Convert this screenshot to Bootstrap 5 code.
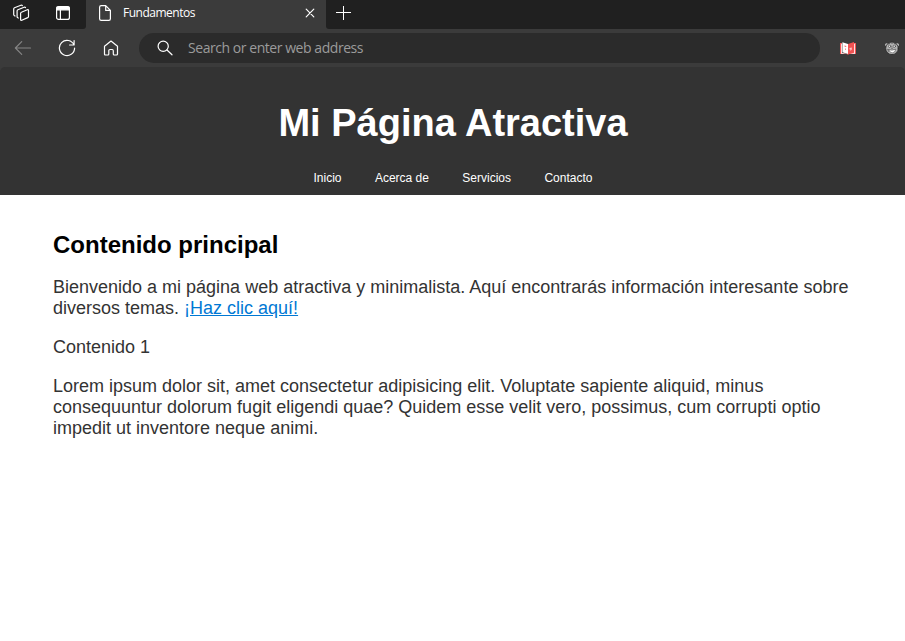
<!DOCTYPE html>
<html lang="es">
<head>
<meta charset="utf-8">
<meta name="viewport" content="width=device-width, initial-scale=1">
<title>Fundamentos</title>
<link href="https://cdn.jsdelivr.net/npm/bootstrap@5.3.0/dist/css/bootstrap.min.css" rel="stylesheet">
<style>
body{font-family:"Liberation Sans",Arial,sans-serif;color:#333;background:#fff;height:641px;overflow:hidden}
svg{display:block;flex:none;fill:none;stroke:#fff;stroke-width:1.2;stroke-linecap:round;stroke-linejoin:round}
.chrome{font-family:"Open Sans","Noto Sans",sans-serif;background:#3b3b3b}
.tab-strip{height:29px;background:#3b3b3b}
.strip-left{width:86px;padding-left:12px;gap:24px;background:#202020;border-bottom-right-radius:3px}
.tab-active{width:240px;padding:0 11px 3px 11px}
.tab-title{font-size:12px;line-height:16px;color:#fff;letter-spacing:-.5px;margin-left:10px}
.strip-right{background:#202020;border-bottom-left-radius:3px;padding:0 0 3px 9px}
.toolbar{height:38px;padding:0 5px 0 14px}
.tool-gap{margin-left:26px}
.back-arrow{stroke:#858585}
.book-icon{margin-left:20px;stroke:none}
.face-icon{margin-left:29px}
.address{width:681px;height:30px;background:#2b2b2b;margin-left:19px;padding-left:17px}
.address span{font-size:14px;line-height:20px;color:#9b9b9b;letter-spacing:-.45px;margin-left:14px}
.header-wrap{background:#3b3b3b}
.site-header{height:128px;background:#333;color:#fff;padding-top:34px;border-radius:5px 5px 0 0}
.site-header h1{font-size:38px;line-height:45px;font-weight:700;margin:0;padding-left:1px}
.site-nav{gap:33.4px;margin-top:25px;padding-left:1px;font-size:12px;line-height:14px}
.site-nav a{color:#fff;text-decoration:none}
main{padding:36px 53px 0;font-size:18px;line-height:21px}
main h2{font-size:24px;line-height:28px;font-weight:700;color:#000;margin:0 0 18px}
main p{margin:0 0 18px}
main a{color:#0078d4}
</style>
</head>
<body>
<div class="chrome">
  <div class="tab-strip d-flex">
    <div class="strip-left d-flex align-items-center pb-1">
      <svg width="18" height="18" viewBox="0 0 18 18"><path d="m9.4 8.2 5.9-2.5q1.2-.4 1.2.8v5.9q0 .8-.8 1.2l-5.9 2.7q-1.2.4-1.2-.8V9.4q0-.9.8-1.2zM6.4 14l-.6-.2q-.7-.3-.7-1.1V7q0-.9.8-1.3l6.2-2.5q1-.3 1.4.4M3 12l-.5-.3q-.8-.3-.8-1.1V5q0-.9.8-1.3L8.9 1.3q.9-.3 1.4.2"/></svg>
      <svg width="18" height="18" viewBox="0 0 18 18"><rect x="2.6" y="2.6" width="12.8" height="12.8" rx="2"/><path d="M3 3h12v2.8H3z" fill="#fff"/><path d="M6.4 6v9"/></svg>
    </div>
    <div class="tab-active d-flex align-items-center">
      <svg width="16" height="18" viewBox="0 0 16 18"><path d="M2.6 3.2q0-1.6 1.6-1.6h4.5l4.7 4.7v8.5q0 1.6-1.6 1.6H4.2q-1.6 0-1.6-1.6zM8.7 1.8v4.6h4.6"/></svg>
      <span class="tab-title">Fundamentos</span>
      <svg class="ms-auto" width="10" height="10" viewBox="0 0 10 10"><path d="m1.2 1.2 7.6 7.6m0-7.6L1.2 8.8"/></svg>
    </div>
    <div class="strip-right flex-grow-1 d-flex align-items-center">
      <svg width="16" height="16" viewBox="0 0 16 16" stroke-linecap="butt" shape-rendering="crispEdges"><path d="M8.5 1.5v13M2 7.5h13.5"/></svg>
    </div>
  </div>
  <div class="toolbar d-flex align-items-center">
    <svg class="back-arrow" width="18" height="16" viewBox="0 0 18 16"><path d="M16.5 8H1.5m6.2-6.3L1.4 8l6.3 6.3"/></svg>
    <svg class="tool-gap" width="18" height="18" viewBox="0 0 18 18"><path d="M16 6A7.6 7.6 0 1 0 16.6 9M16.1 1.5V6h-4.5"/></svg>
    <svg class="tool-gap" width="18" height="18" viewBox="0 0 18 18"><path d="M2.5 7.2 9 2l6.5 5.2V15q0 1-1 1h-2.3q-.9 0-.9-1v-3.3q0-1.2-1.2-1.2H8q-1.2 0-1.2 1.2V15q0 1-.9 1H3.5q-1 0-1-1z"/></svg>
    <div class="address rounded-pill d-flex align-items-center">
      <svg width="18" height="18" viewBox="0 0 18 18"><circle cx="7.2" cy="7.2" r="5.1"/><path d="m11 11 5 4.8"/></svg>
      <span>Search or enter web address</span>
    </div>
    <svg class="book-icon" width="16" height="14" viewBox="0 0 16 14"><path fill="#f05252" d="M0 2h2v10l6 1v.8L6.5 13H0zM8 3l6-2v1h2v11H9.5l-1.5.7z"/><path fill="#fff" d="M2.4 1.2 8 3v10l-5.6-1.8zM1 2.8h.8v8.9l4.2 1H1zM15 2.8h-.8v8.9l-4.2 1h5z"/><path fill="#f05252" d="m4.5 4.6 1.7.5V6l-1.7-.5zM5 7.5l1 .3v1l-1-.3z"/><path fill="#ffc5c5" d="m9.5 7 2.3-.5v2L10.4 10V8.4l-.9.2z"/></svg>
    <svg class="face-icon" width="14" height="14" viewBox="0 0 14 14"><circle cx="1.6" cy="3.8" r="1.5" fill="#c8c8c8" stroke="none"/><circle cx="12.4" cy="3.8" r="1.5" fill="#c8c8c8" stroke="none"/><circle cx="7" cy="7.3" r="6.3" fill="#b4b4b4" stroke="#252525" stroke-width=".8"/><path d="M3.5 3 5 2.2M7 1.7v1M10.5 3 9 2.2" stroke="#444" stroke-width=".8"/><circle cx="4.7" cy="5.3" r="1.2" fill="#eee" stroke="#444" stroke-width=".7"/><circle cx="9.3" cy="5.3" r="1.2" fill="#eee" stroke="#444" stroke-width=".7"/><path d="M6.4 7.2h1.2M2.6 8.2l1 2.2" stroke="#555" stroke-width=".8"/><path d="M3.8 8.7q3.2 1.1 7-.5-.6 3.7-3.6 3.7Q4.6 12 3.8 8.7z" fill="#fff" stroke="#444" stroke-width=".6"/></svg>
  </div>
</div>
<div class="header-wrap">
<header class="site-header text-center">
  <h1>Mi Página Atractiva</h1>
  <nav class="site-nav d-flex justify-content-center">
    <a href="#">Inicio</a><a href="#">Acerca de</a><a href="#">Servicios</a><a href="#">Contacto</a>
  </nav>
</header>
</div>
<main>
  <h2>Contenido principal</h2>
  <p>Bienvenido a mi página web atractiva y minimalista. Aquí encontrarás información interesante sobre diversos temas. <a href="#">¡Haz clic aquí!</a></p>
  <p>Contenido 1</p>
  <p>Lorem ipsum dolor sit, amet consectetur adipisicing elit. Voluptate sapiente aliquid, minus consequuntur dolorum fugit eligendi quae? Quidem esse velit vero, possimus, cum corrupti optio impedit ut inventore neque animi.</p>
</main>
<script src="https://cdn.jsdelivr.net/npm/bootstrap@5.3.0/dist/js/bootstrap.bundle.min.js"></script>
</body>
</html>
